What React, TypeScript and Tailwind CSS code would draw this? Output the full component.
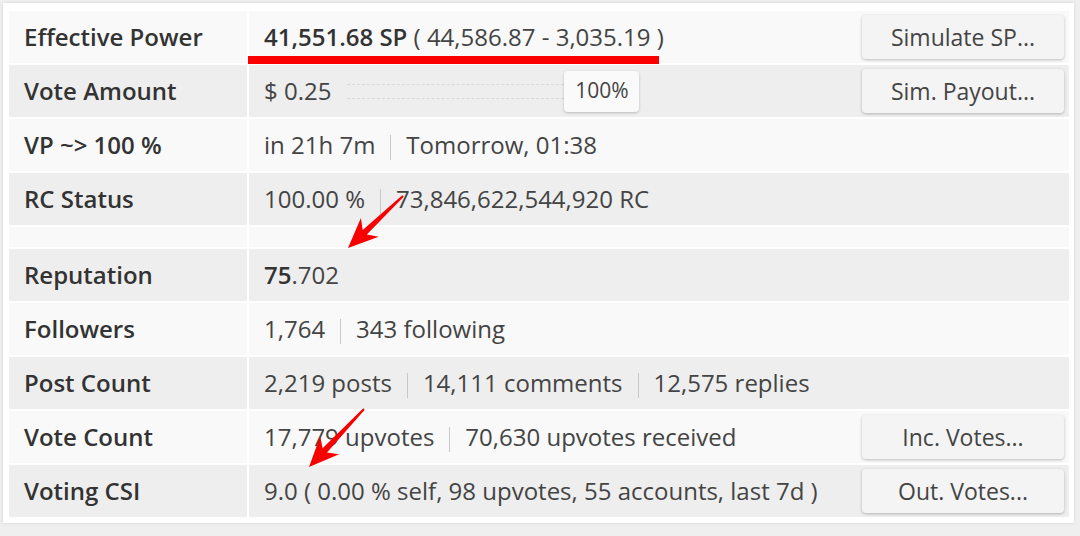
import React from 'react';

type Row = {
  label: string;
  value: React.ReactNode;
  shade: 'light' | 'gray';
  button?: string;
};

const Sep = () => <span className="inline-block w-px h-[25px] bg-[#c8c8c8] mx-[15px] align-middle" />;

const rows: Row[] = [
  {
    label: 'Effective Power',
    shade: 'light',
    button: 'Simulate SP...',
    value: (
      <span>
        <span className="font-semibold text-[#333]">41,551.68 SP</span> ( 44,586.87 - 3,035.19 )
      </span>
    ),
  },
  {
    label: 'Vote Amount',
    shade: 'gray',
    button: 'Sim. Payout...',
    value: (
      <div className="flex items-center">
        <span>$ 0.25</span>
        <div className="ml-[16px] w-[217px] h-[15px] border-y border-dashed border-[#d8d8d8]" />
        <div className="w-[75px] h-[41px] bg-[#fafafa] rounded-[4px] shadow-[0_1px_3px_rgba(0,0,0,0.22)] flex items-center justify-center text-[21px] text-[#444]">
          100%
        </div>
      </div>
    ),
  },
  {
    label: 'VP ~> 100 %',
    shade: 'light',
    value: (
      <span>
        in 21h 7m<Sep />Tomorrow, 01:38
      </span>
    ),
  },
  {
    label: 'RC Status',
    shade: 'gray',
    value: (
      <span>
        100.00 %<Sep />73,846,622,544,920 RC
      </span>
    ),
  },
];

const rows2: Row[] = [
  {
    label: 'Reputation',
    shade: 'gray',
    value: (
      <span>
        <span className="font-semibold text-[#333]">75</span>.702
      </span>
    ),
  },
  {
    label: 'Followers',
    shade: 'light',
    value: (
      <span>
        1,764<Sep />343 following
      </span>
    ),
  },
  {
    label: 'Post Count',
    shade: 'gray',
    value: (
      <span>
        2,219 posts<Sep />14,111 comments<Sep />12,575 replies
      </span>
    ),
  },
  {
    label: 'Vote Count',
    shade: 'light',
    button: 'Inc. Votes...',
    value: (
      <span>
        17,779 upvotes<Sep />70,630 upvotes received
      </span>
    ),
  },
  {
    label: 'Voting CSI',
    shade: 'gray',
    button: 'Out. Votes...',
    value: <span>9.0 ( 0.00 % self, 98 upvotes, 55 accounts, last 7d )</span>,
  },
];

function TableRow({ row }: { row: Row }) {
  const bg = row.shade === 'gray' ? 'bg-[#eeeeee]' : 'bg-[#f9f9f9]';
  return (
    <div className="grid grid-cols-[238px_1fr] gap-[2px] h-[52px]">
      <div className={`${bg} flex items-center pl-[15px] font-semibold text-[#333]`}>{row.label}</div>
      <div className={`${bg} flex items-center justify-between pl-[15px] pr-[5px] text-[#444]`}>
        {row.value}
        {row.button && (
          <button className="w-[202px] h-[44px] bg-[#f4f4f4] rounded-[4px] shadow-[0_1px_3px_rgba(0,0,0,0.25)] text-[#444] text-[23px]">
            {row.button}
          </button>
        )}
      </div>
    </div>
  );
}

function arrowPoints(tx: number, ty: number, px: number, py: number) {
  const dx = px - tx;
  const dy = py - ty;
  const len = Math.hypot(dx, dy);
  const ux = dx / len;
  const uy = dy / len;
  const nx = -uy;
  const ny = ux;
  const h = 30;
  const w = 13;
  const notch = 7;
  const bx = px - h * ux;
  const by = py - h * uy;
  const qx = bx + notch * ux;
  const qy = by + notch * uy;
  const pts = [
    [tx + 1 * nx, ty + 1 * ny],
    [qx + 3 * nx, qy + 3 * ny],
    [bx + w * nx, by + w * ny],
    [px, py],
    [bx - w * nx, by - w * ny],
    [qx - 3 * nx, qy - 3 * ny],
    [tx - 1 * nx, ty - 1 * ny],
  ];
  return pts.map((p) => `${p[0].toFixed(1)},${p[1].toFixed(1)}`).join(' ');
}

export default function App() {
  return (
    <div className="relative min-h-screen bg-[#efefef] p-[3px] font-['Open_Sans',sans-serif] text-[24px]">
      <div className="w-[1071px] bg-white shadow-[0_0_3px_rgba(0,0,0,0.12)] pt-[8px] pb-[6px] pl-[6px] pr-[5px]">
        <div className="flex flex-col gap-[2px]">
          {rows.map((r) => (
            <TableRow key={r.label} row={r} />
          ))}
          <div className="grid grid-cols-[238px_1fr] gap-[2px] h-[20px]">
            <div className="bg-[#f9f9f9]" />
            <div className="bg-[#f9f9f9]" />
          </div>
          {rows2.map((r) => (
            <TableRow key={r.label} row={r} />
          ))}
        </div>
      </div>

      {/* annotations */}
      <div className="absolute left-[248px] top-[56px] w-[411px] h-[8px] bg-[#fb0000]" />
      <svg className="absolute left-0 top-0 pointer-events-none" width="1080" height="536">
        <polygon points={arrowPoints(403, 196, 348, 248)} fill="#f80000" />
        <polygon points={arrowPoints(364, 409, 309, 467)} fill="#f80000" />
      </svg>
    </div>
  );
}
